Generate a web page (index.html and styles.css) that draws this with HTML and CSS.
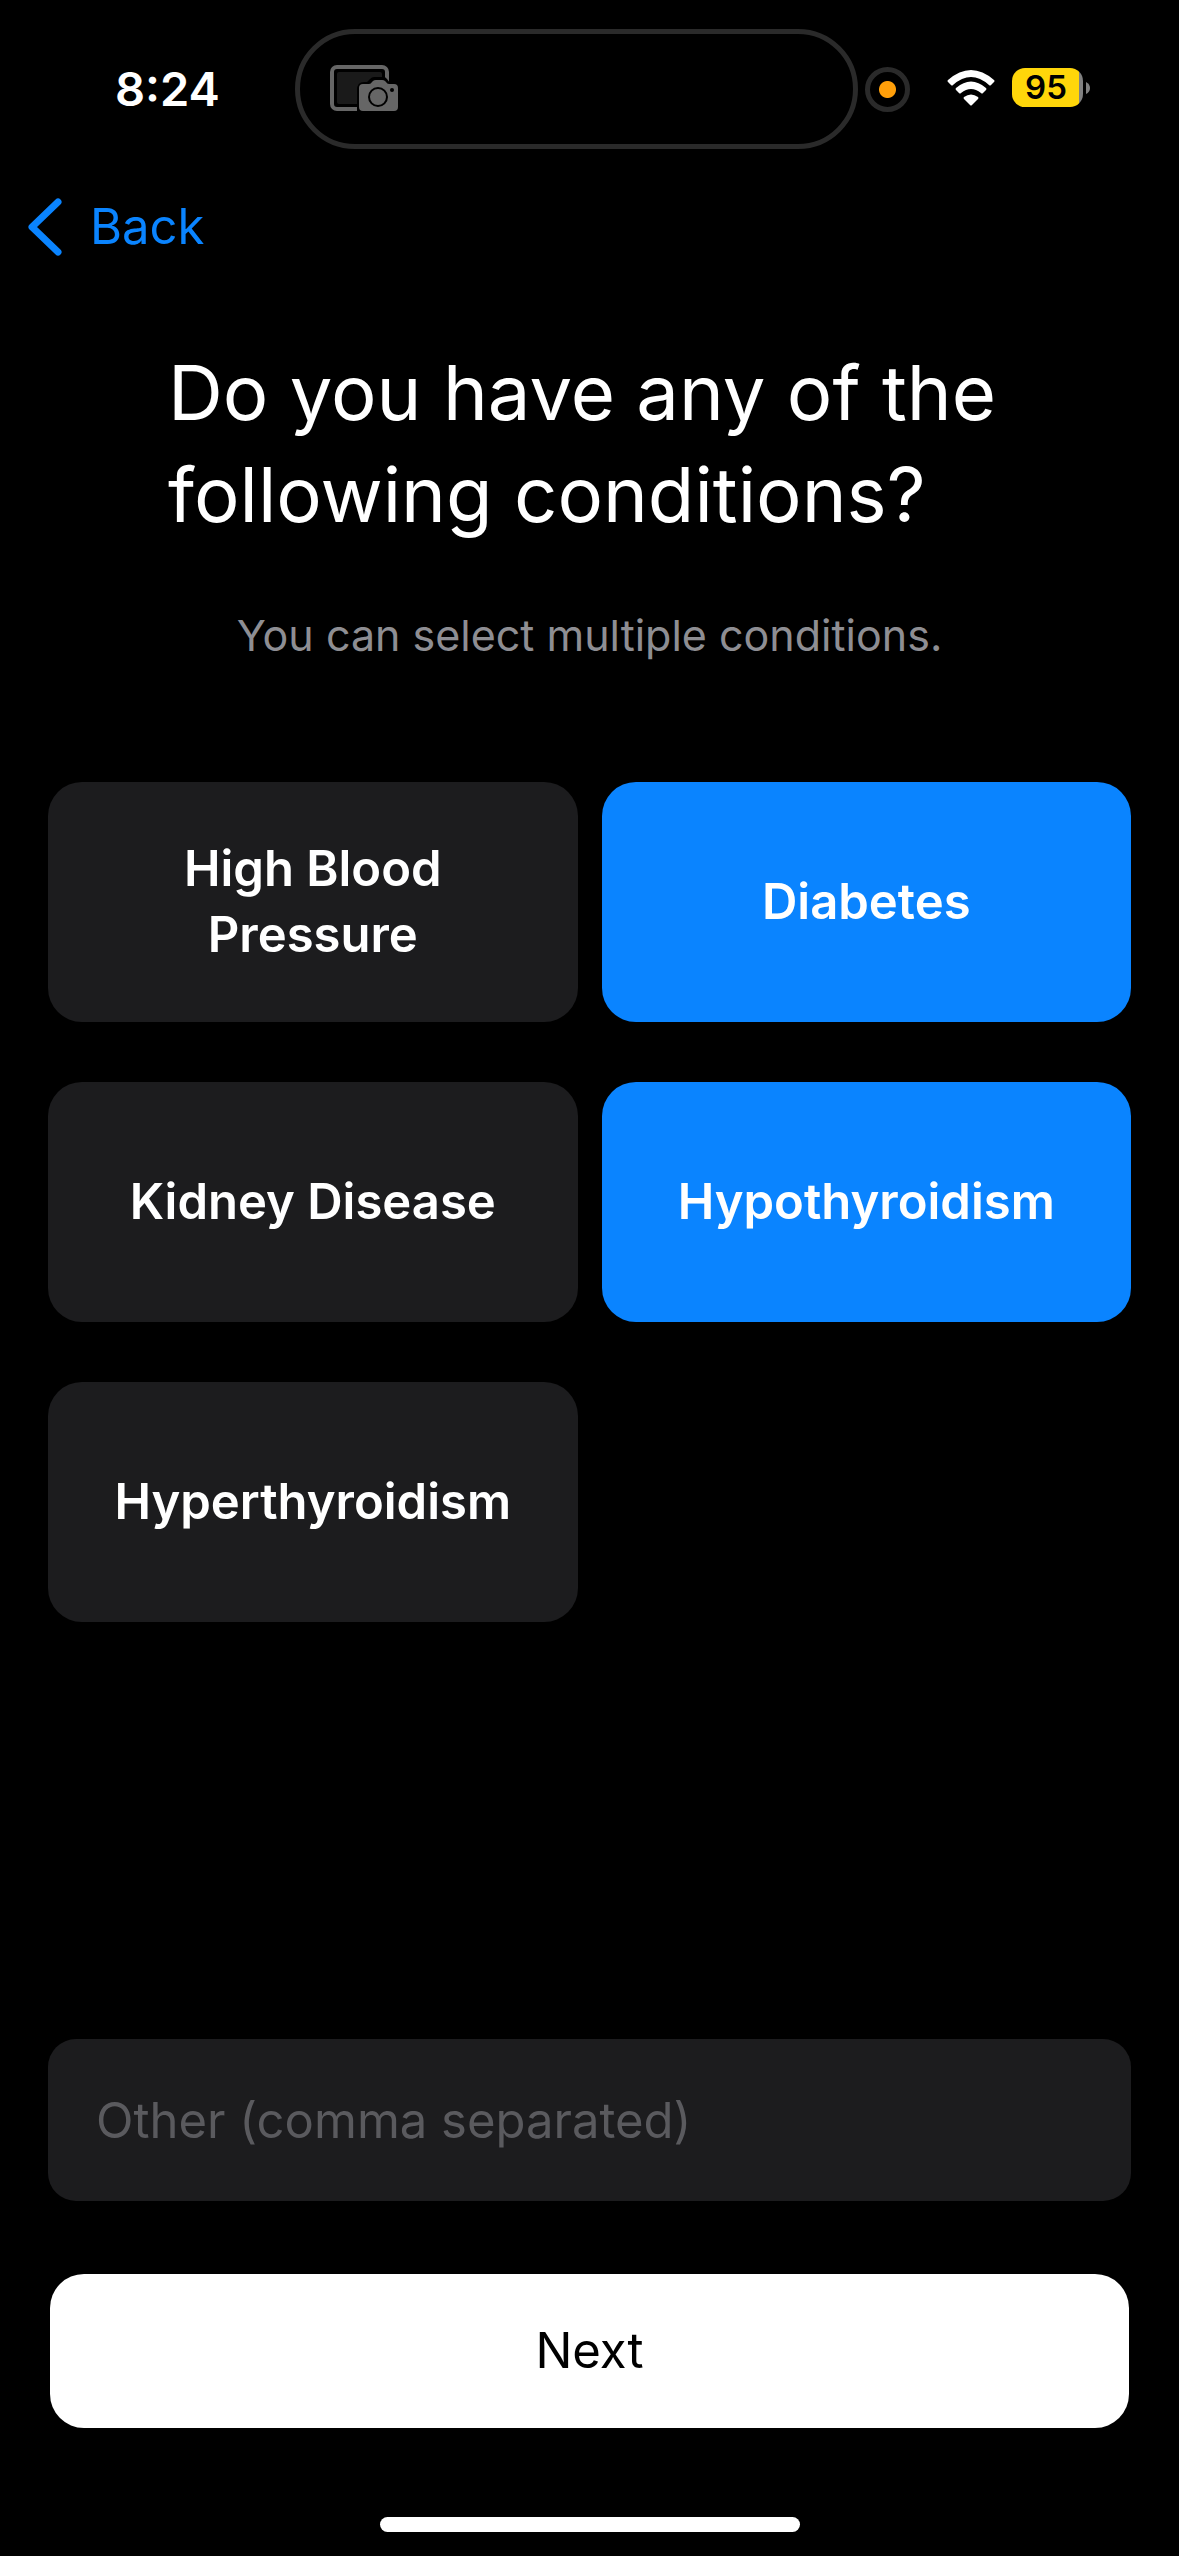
FILE: index.html
```html
<!DOCTYPE html>
<html lang="en">
<head>
  <meta charset="UTF-8">
  <meta name="viewport" content="width=device-width, initial-scale=1.0">
  <title>Conditions</title>
  <link rel="stylesheet" href="styles.css">
</head>
<body>
  <div class="status-bar">
    <span class="time">8:24</span>
    <div class="island">
      <svg class="capture-icon" viewBox="0 0 70 48" width="70" height="48">
        <rect x="2" y="2" width="55" height="42" rx="5" fill="none" stroke="#666" stroke-width="4"/>
        <rect x="7" y="7" width="45" height="32" rx="2" fill="#1a1a1a"/>
        <path d="M27 48V25q0-8 7-8h3l3-3q2-2 4-2h9q3 0 4 2l3 4h8v30z" fill="#000"/>
        <path d="M33 19h6q2 0 3-2l1-1q1-1 3-1h6q2 0 3 1l1 1q1 2 3 2h5q4 0 4 4v19q0 4-4 4H33q-4 0-4-4V23q0-4 4-4z" fill="#666"/>
        <circle cx="48" cy="32" r="9" fill="none" stroke="#000" stroke-width="2"/>
        <circle cx="62" cy="25" r="2" fill="#000"/>
      </svg>
    </div>
    <span class="mic-dot"></span>
    <div class="indicators">
      <svg viewBox="0 0 48 36" width="48" height="36">
        <path d="M1 10Q24-10 47 10q1 1 0 2l-3 3q-1 1-2 0Q24-1 6 15q-1 1-2 0l-3-3q-1-1 0-2z" fill="#fff"/>
        <path d="M9 18q15-13 30 0 1 1 0 2l-3 3q-1 1-2 0-10-8-20 0-1 1-2 0l-3-3q-1-1 0-2z" fill="#fff"/>
        <path d="M17 27q7-5 14 0 1 1 0 2l-6 6q-1 1-2 0l-6-6q-1-1 0-2z" fill="#fff"/>
      </svg>
      <div class="battery">
        <span class="battery-level">95</span>
        <svg viewBox="0 0 4 12" width="4" height="12"><path d="M0 0q4 2 4 6t-4 6z" fill="#808080"/></svg>
      </div>
    </div>
  </div>

  <nav>
    <a class="back" href="#">
      <svg viewBox="0 0 34 58" width="34" height="58">
        <path d="M30 4L4 29l26 25" fill="none" stroke="#0a84ff" stroke-width="7" stroke-linecap="round" stroke-linejoin="round"/>
      </svg>
      Back
    </a>
  </nav>

  <main>
    <h1>Do you have any of the following conditions?</h1>
    <p class="hint">You can select multiple conditions.</p>

    <div class="conditions">
      <button class="card" type="button" aria-pressed="false">High Blood Pressure</button>
      <button class="card" type="button" aria-pressed="true">Diabetes</button>
      <button class="card" type="button" aria-pressed="false">Kidney Disease</button>
      <button class="card" type="button" aria-pressed="true">Hypothyroidism</button>
      <button class="card" type="button" aria-pressed="false">Hyperthyroidism</button>
    </div>

    <form class="bottom">
      <input class="other" type="text" name="other" placeholder="Other (comma separated)" aria-label="Other conditions">
      <button class="next" type="button">Next</button>
    </form>
  </main>

  <div class="home-indicator"></div>

  <script>
    // Toggle a condition on click
    document.querySelectorAll(".card").forEach(card => {
      card.addEventListener("click", () => {
        const selected = card.getAttribute("aria-pressed") === "true";
        card.setAttribute("aria-pressed", String(!selected));
      });
    });
  </script>
</body>
</html>
```
FILE: styles.css
```css
* {
  box-sizing: border-box;
  margin: 0;
  padding: 0;
}
body {
  display: flex;
  flex-direction: column;
  min-height: 100vh;
  background: #000;
  color: #fff;
  font-family: Inter, "Liberation Sans", sans-serif;
  font-size: 49px;
  line-height: 66px;
}
button, input {
  font: inherit;
  border: none;
}

/* Status bar */
.status-bar {
  display: flex;
  align-items: center;
  padding: 29px 89px 0 0;
}
.time {
  width: 25vw;
  padding-left: 115px;
  font-size: 47px;
  font-weight: 600;
}
.island {
  display: flex;
  flex: 1;
  align-items: center;
  height: 120px;
  padding-left: 30px;
  border: 5px solid #2a2a2a;
  border-radius: 60px;
}
.mic-dot {
  width: 45px;
  height: 45px;
  margin: 0 37px 0 7px;
  border: 5px solid #2a2a2a;
  border-radius: 50%;
  background: radial-gradient(circle, #ff9f0a 8px, #000 9px);
}
.indicators {
  display: flex;
  align-items: center;
  gap: 17px;
  padding-bottom: 3px;
}
.battery {
  display: flex;
  align-items: center;
  gap: 3px;
}
.battery-level {
  width: 71px;
  padding-right: 3px;
  border-radius: 13px;
  background: linear-gradient(to right, #ffd60a 67px, #808080 67px);
  color: #000;
  font-size: 33px;
  font-weight: 600;
  line-height: 39px;
  text-align: center;
}

/* Navigation */
nav {
  display: flex;
  align-items: center;
  height: 156px;
  padding: 0 28px;
}
.back {
  display: flex;
  align-items: center;
  gap: 28px;
  color: #0a84ff;
  text-decoration: none;
}

/* Content */
main {
  display: flex;
  flex: 1;
  flex-direction: column;
  padding: 36px 48px 0;
}
h1 {
  padding: 0 120px;
  font-size: 76px;
  font-weight: 400;
  line-height: 102px;
}
.hint {
  margin: 60px 0 117px;
  color: #8e8e93;
  font-size: 43px;
  line-height: 60px;
  text-align: center;
}
.conditions {
  display: grid;
  grid-template-columns: 1fr 1fr;
  gap: 60px 24px;
}
.card {
  min-height: 240px;
  padding: 48px;
  border-radius: 34px;
  background: #1c1c1e;
  color: #fff;
  font-weight: 600;
  cursor: pointer;
}
.card[aria-pressed="true"] {
  background: #0a84ff;
}
.bottom {
  display: flex;
  flex-direction: column;
  gap: 73px;
  margin-top: auto;
}
.other {
  width: 100%;
  height: 162px;
  padding: 0 48px;
  border-radius: 28px;
  background: #1c1c1e;
  color: #fff;
}
.other::placeholder {
  color: #5a5a5e;
  opacity: 1;
}
.next {
  height: 154px;
  margin: 0 2px;
  border-radius: 34px;
  background: #fff;
  color: #000;
  cursor: pointer;
}
.home-indicator {
  width: 420px;
  height: 15px;
  margin: 89px auto 24px;
  border-radius: 8px;
  background: #fff;
}
```
